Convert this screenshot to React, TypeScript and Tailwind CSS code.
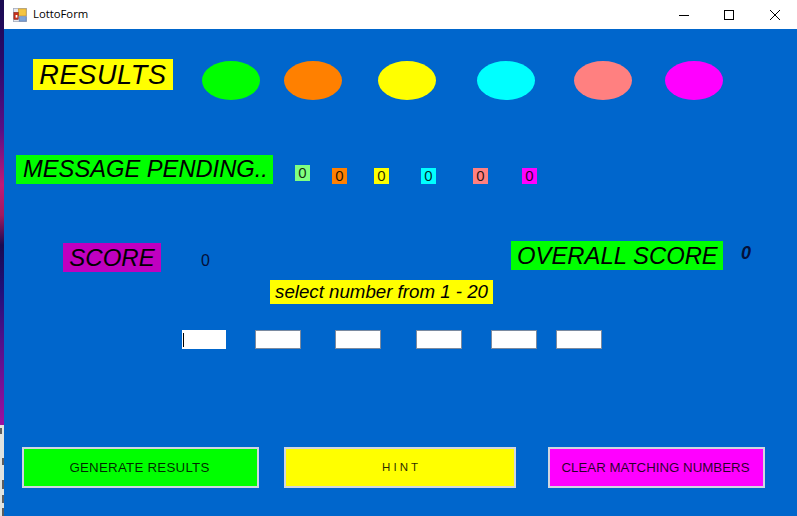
const ARIAL = "font-['Liberation_Sans',Arial,sans-serif]";

const balls = [
  { color: "bg-[#00ff00]", ml: "ml-[29px]" },
  { color: "bg-[#ff8000]", ml: "ml-[24px]" },
  { color: "bg-[#ffff00]", ml: "ml-[36px]" },
  { color: "bg-[#00ffff]", ml: "ml-[41px]" },
  { color: "bg-[#ff8080]", ml: "ml-[39px]" },
  { color: "bg-[#ff00ff]", ml: "ml-[33px]" },
];

const counters = [
  { color: "bg-[#80ff80]", pos: "ml-[22px] mt-[10px]" },
  { color: "bg-[#ff8000]", pos: "ml-[22px] mt-[13px]" },
  { color: "bg-[#ffff00]", pos: "ml-[27px] mt-[13px]" },
  { color: "bg-[#00ffff]", pos: "ml-[32px] mt-[13px]" },
  { color: "bg-[#ff8080]", pos: "ml-[37px] mt-[13px]" },
  { color: "bg-[#ff00ff]", pos: "ml-[34px] mt-[13px]" },
];

const inputs = [
  { className: "ml-0 w-[44px]", caret: true },
  { className: "ml-[29px] w-[46px] border border-[#7a8aa0]" },
  { className: "ml-[34px] w-[46px] border border-[#7a8aa0]" },
  { className: "ml-[35px] w-[46px] border border-[#7a8aa0]" },
  { className: "ml-[29px] w-[46px] border border-[#7a8aa0]" },
  { className: "ml-[19px] w-[46px] border border-[#7a8aa0]" },
];

// sliver of the desktop behind the window
function DesktopEdge() {
  return (
    <div className="flex h-full w-[4px] shrink-0 flex-col">
      <div className="h-[425px] bg-[linear-gradient(to_bottom,#1a0a50_0px,#2a0a6a_60px,#5a0f86_130px,#c01a78_185px,#a01a60_215px,#1a0a50_245px,#20107a_290px,#50108a_340px,#9a10a0_425px)]" />
      <svg width="4" height="91" viewBox="0 0 4 91" className="bg-[#dfe3e0]">
        <path d="M1 3V9M3 33V40M3 55V64M3 70V78M3 83V91" stroke="#333" strokeWidth="1.5" />
      </svg>
    </div>
  );
}

function TitleBar() {
  return (
    <div className="flex h-[29px] items-center bg-white">
      <svg width="14" height="14" viewBox="0 0 16 16" className="ml-[9px]">
        <rect x="0.5" y="0.5" width="15" height="15" fill="#e8e8ee" stroke="#a8b0c0" />
        <rect x="6" y="1" width="9" height="8" fill="#f5c542" stroke="#c08a20" strokeWidth="0.6" />
        <rect x="1" y="5" width="5" height="8" fill="#c8301c" stroke="#7a1a10" strokeWidth="0.6" />
        <rect x="3" y="8" width="2" height="3" fill="#fff" />
        <rect x="7" y="10" width="8" height="5" fill="#7ea4d8" stroke="#4d70a8" strokeWidth="0.6" />
      </svg>
      <span className="ml-[6px] font-['Open_Sans',sans-serif] text-[11.3px] text-black">LottoForm</span>
      <div className="ml-auto flex items-center">
        <svg width="10" height="10" viewBox="0 0 10 10" className="mr-[35px]">
          <path d="M0 5.5H10" stroke="#000" strokeWidth="1" />
        </svg>
        <svg width="10" height="10" viewBox="0 0 10 10" className="mr-[36px]">
          <rect x="0.5" y="0.5" width="9" height="9" fill="none" stroke="#000" />
        </svg>
        <svg width="10" height="10" viewBox="0 0 10 10" className="mr-[17px]">
          <path d="M0 0L10 10M10 0L0 10" stroke="#000" strokeWidth="1" />
        </svg>
      </div>
    </div>
  );
}

function Heading({ bg, className, children }: { bg: string; className: string; children: string }) {
  return (
    <div className={`${bg} ${className} ${ARIAL} flex items-center justify-center whitespace-nowrap italic text-black`}>
      {children}
    </div>
  );
}

function FormButton({ className, children }: { className: string; children: string }) {
  return (
    <button className={`${className} ${ARIAL} h-[41px] whitespace-nowrap border-[2px] border-[#d0d6e0] text-black/85`}>
      {children}
    </button>
  );
}

export default function App() {
  return (
    <div className="flex h-[516px] w-[797px] overflow-hidden">
      <DesktopEdge />
      <div className="flex min-w-0 flex-1 flex-col">
        <TitleBar />
        <div className={`${ARIAL} flex flex-1 flex-col bg-[#0066cc]`}>
          <div className="mt-[30px] flex items-start">
            <Heading bg="bg-[#ffff00]" className="ml-[29px] h-[31px] w-[140px] pt-[2px] text-[27px] tracking-[0.7px]">RESULTS</Heading>
            {balls.map((b, i) => (
              <div key={i} className={`${b.color} ${b.ml} mt-[2px] h-[39px] w-[58px] rounded-[50%]`} />
            ))}
          </div>

          <div className="mt-[55px] flex items-start">
            <Heading bg="bg-[#00ff00]" className="ml-[12px] h-[29px] w-[257px] pl-[2px] text-[23.7px]">MESSAGE PENDING..</Heading>
            {counters.map((c, i) => (
              <div
                key={i}
                className={`${c.color} ${c.pos} flex h-[16px] w-[15px] items-center justify-center text-[15px] text-black/85`}
              >
                0
              </div>
            ))}
          </div>

          <div className="mt-[57px] flex items-start">
            <Heading bg="bg-[#c000c0]" className="ml-[59px] mt-[2px] h-[29px] w-[98px] text-[24px]">SCORE</Heading>
            <span className="ml-[40px] mt-[11px] text-[16px] leading-[18px] text-[#04103a]">0</span>
            <Heading bg="bg-[#00ff00]" className="ml-[301px] h-[29px] w-[212px] pl-px text-[23.8px]">OVERALL SCORE</Heading>
            <span className="ml-[18px] mt-[2px] text-[18px] font-bold italic leading-[20px] text-[#04103a]">0</span>
          </div>

          <Heading bg="bg-[#ffff00]" className="ml-[266px] mt-[8px] h-[24px] w-[223px] text-[18.7px]">select number from 1 - 20</Heading>

          <div className="ml-[178px] mt-[26px] flex">
            {inputs.map((f, i) => (
              <div key={i} className={`${f.className} flex h-[19px] items-center bg-white pl-px`}>
                {f.caret && <div className="h-[14px] w-px bg-black" />}
              </div>
            ))}
          </div>

          <div className="mt-[98px] flex">
            <FormButton className="ml-[18px] w-[237px] bg-[#00ff00] pr-[2px] text-[13.3px] tracking-[0.25px]">GENERATE RESULTS</FormButton>
            <FormButton className="ml-[25px] w-[232px] bg-[#ffff00] text-[11.5px]">H I N T</FormButton>
            <FormButton className="ml-[32px] w-[217px] bg-[#ff00ff] pr-[2px] text-[13.3px]">CLEAR MATCHING NUMBERS</FormButton>
          </div>
        </div>
      </div>
    </div>
  );
}
